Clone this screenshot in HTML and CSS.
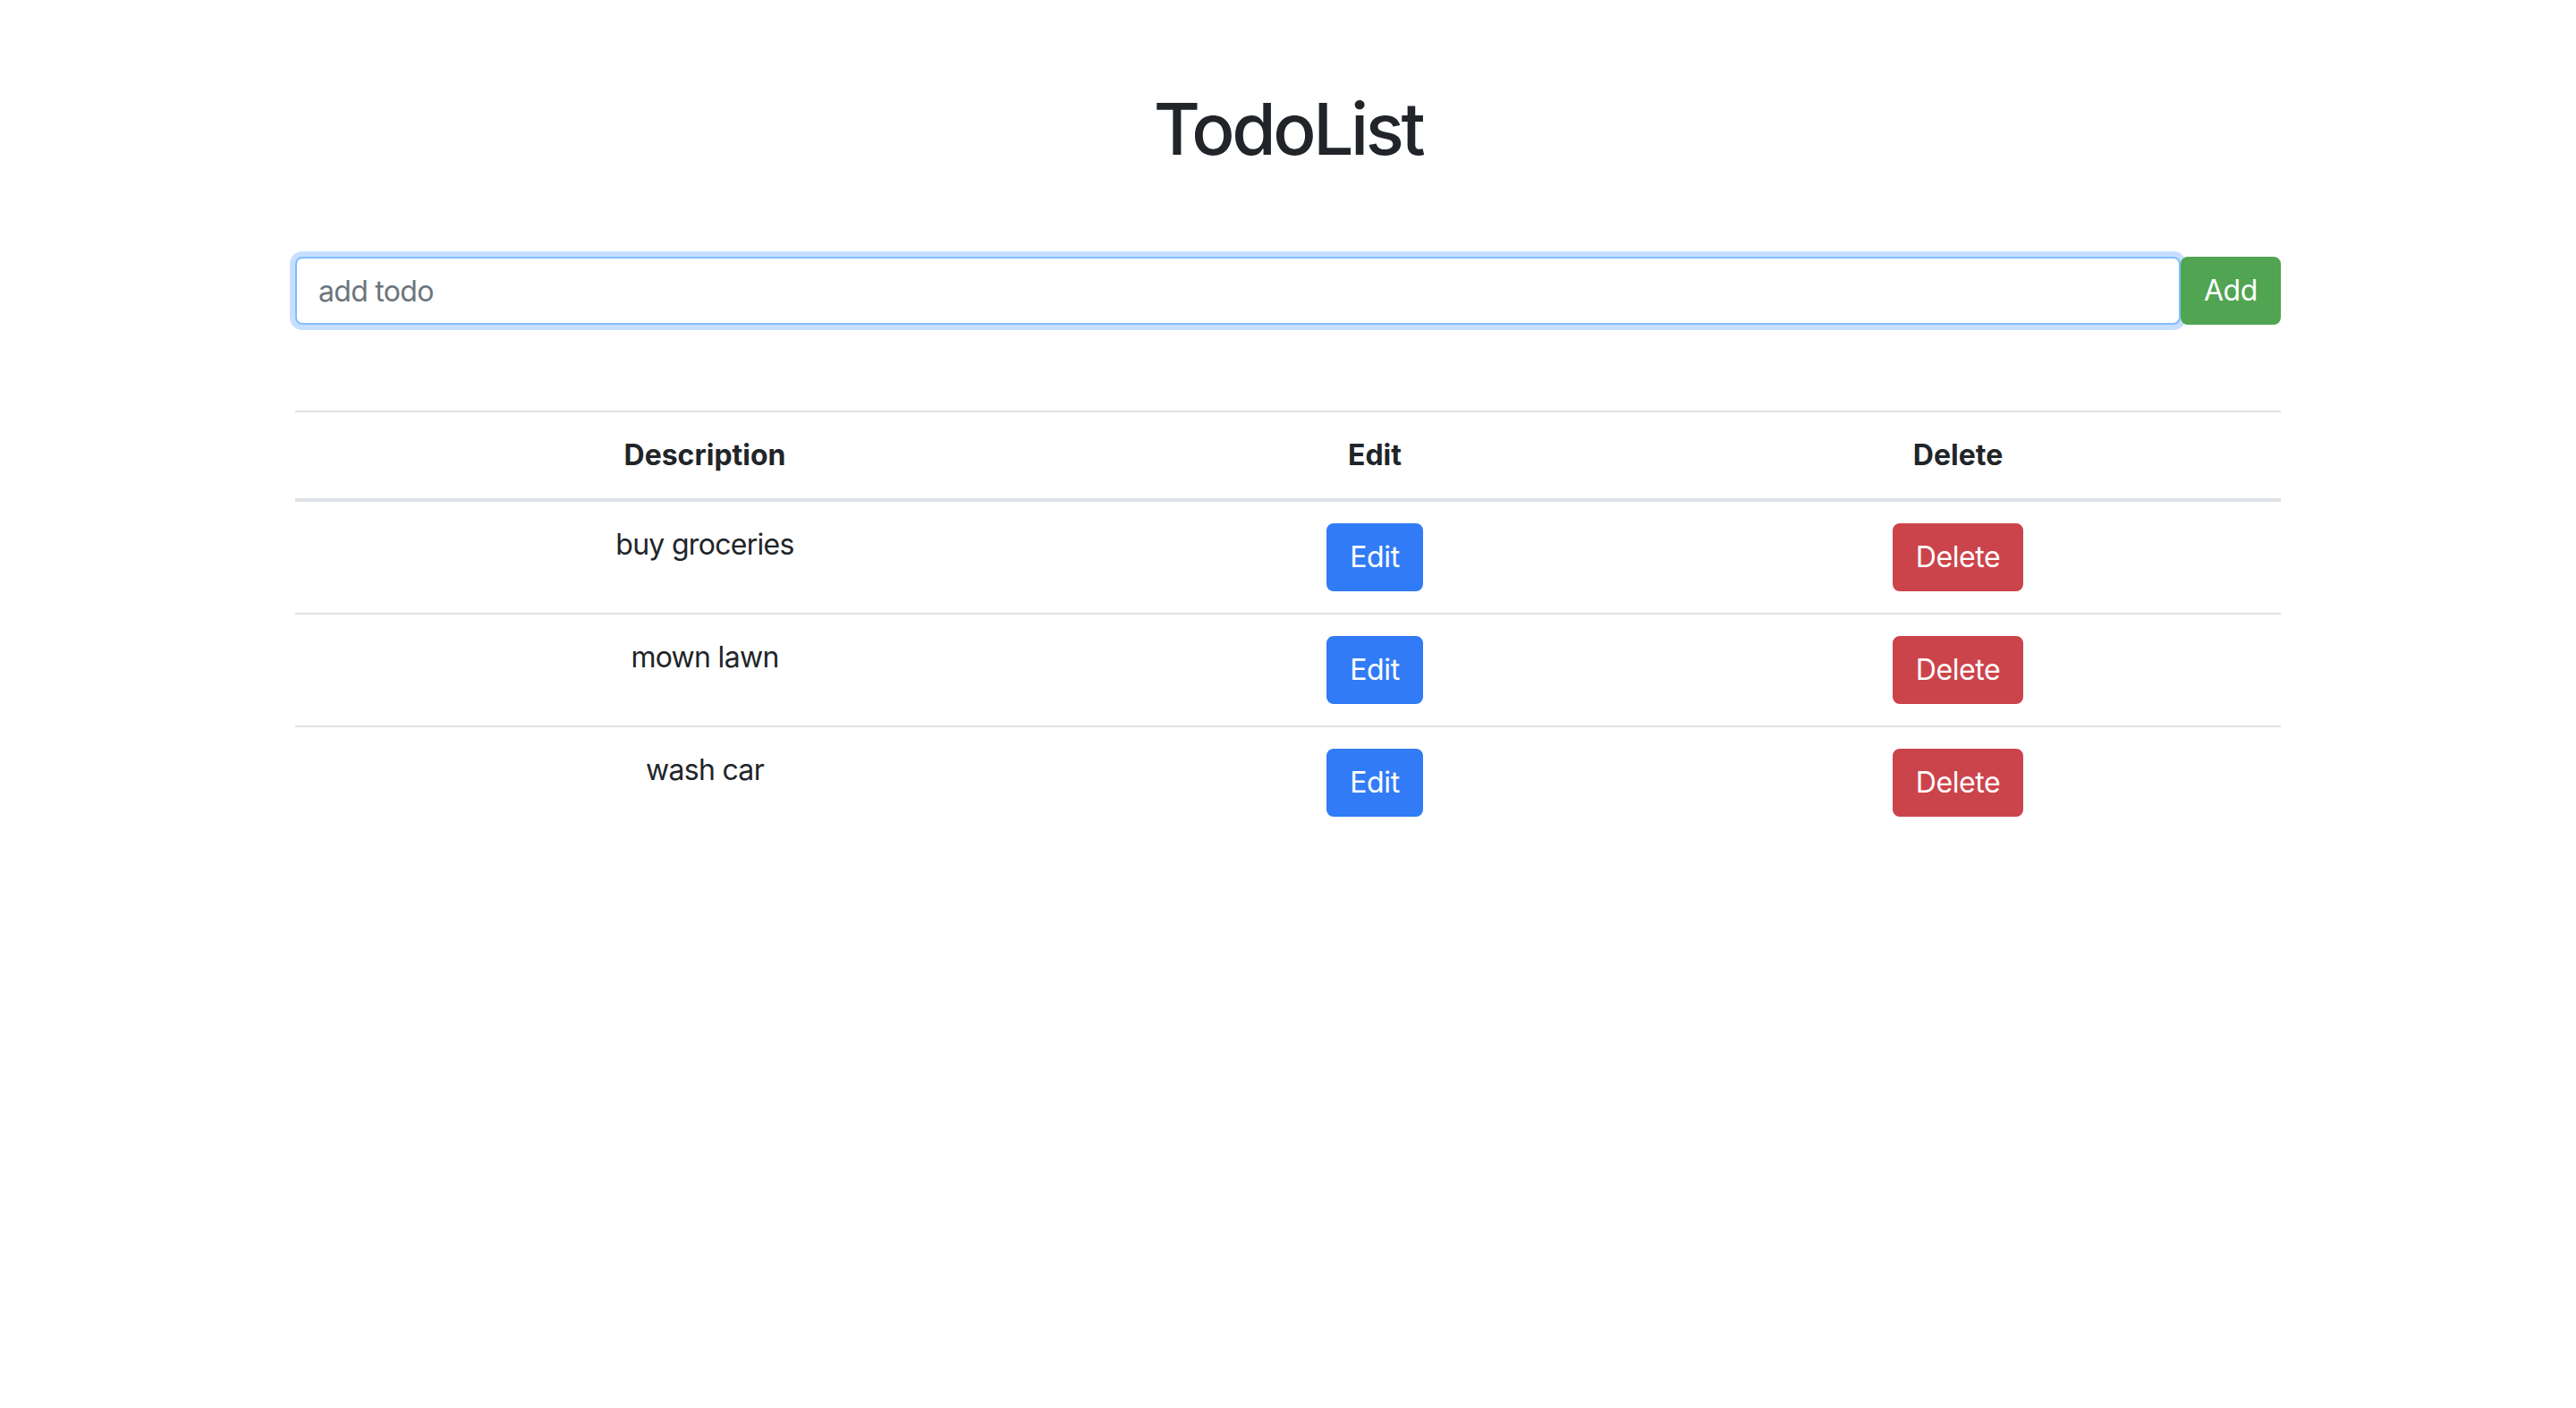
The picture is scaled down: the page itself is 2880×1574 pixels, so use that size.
FILE: index.html
```html
<!DOCTYPE html>
<html lang="en">
<head>
<meta charset="utf-8">
<title>TodoList</title>
<link rel="stylesheet" href="styles.css">
</head>
<body>
<div class="container">
  <h1 class="title">TodoList</h1>
  <form class="add-form">
    <input class="todo-input is-focused" type="text" placeholder="add todo">
    <button class="btn btn-add" type="button">Add</button>
  </form>
  <table class="todo-table">
    <colgroup>
      <col class="col-desc">
      <col class="col-edit">
      <col class="col-delete">
    </colgroup>
    <thead>
      <tr><th>Description</th><th>Edit</th><th>Delete</th></tr>
    </thead>
    <tbody>
      <tr><td>buy groceries</td><td><button class="btn btn-edit" type="button">Edit</button></td><td><button class="btn btn-delete" type="button">Delete</button></td></tr>
      <tr><td>mown lawn</td><td><button class="btn btn-edit" type="button">Edit</button></td><td><button class="btn btn-delete" type="button">Delete</button></td></tr>
      <tr><td>wash car</td><td><button class="btn btn-edit" type="button">Edit</button></td><td><button class="btn btn-delete" type="button">Delete</button></td></tr>
    </tbody>
  </table>
</div>
</body>
</html>
```
FILE: styles.css
```css
* { box-sizing: border-box; }
html, body { margin: 0; padding: 0; background: #ffffff; }
body {
  font-family: Inter, "Noto Sans", "Liberation Sans", sans-serif;
  font-size: 32px;
  line-height: 48px;
  letter-spacing: -0.7px;
  color: #212529;
}
.container {
  width: 2220px;
  margin: 0 auto;
}
.title {
  margin: 96px 0 0 0;
  font-size: 80px;
  line-height: 96px;
  font-weight: 500;
  letter-spacing: -3.4px;
  text-align: center;
  color: #212529;
}
.add-form {
  display: flex;
  margin: 95px 0 0 0;
}
.todo-input {
  flex: 1;
  height: 76px;
  padding: 12px 24px;
  font-family: inherit;
  font-size: 32px;
  line-height: 48px;
  letter-spacing: -0.7px;
  color: #495057;
  background: #fff;
  border: 2px solid #ced4da;
  border-radius: 8px;
  outline: none;
}
.todo-input::placeholder { color: #6c757d; opacity: 1; }
.todo-input.is-focused {
  border-color: #80bdff;
  box-shadow: 0 0 0 6px rgba(0, 110, 255, 0.22);
}
.btn {
  font-family: inherit;
  font-size: 32px;
  line-height: 48px;
  font-weight: 400;
  letter-spacing: -0.4px;
  padding: 12px 24px;
  height: 76px;
  border: 2px solid transparent;
  border-radius: 8px;
  color: #fff;
  cursor: pointer;
}
.btn-add { background: #51a452; border-color: #51a452; }
.btn-edit { background: #317cf6; border-color: #317cf6; }
.btn-delete { background: #cc444b; border-color: #cc444b; }

.todo-table {
  width: 100%;
  margin-top: 96px;
  border-collapse: collapse;
  table-layout: fixed;
}
.col-desc { width: 916px; }
.col-edit { width: 582px; }
.col-delete { width: 722px; }
.todo-table th,
.todo-table td {
  padding: 24px;
  text-align: center;
  vertical-align: top;
  border-top: 2px solid #dee2e6;
}
.todo-table th {
  font-weight: 700;
  letter-spacing: 0;
  border-bottom: 4px solid #dee2e6;
}
```
